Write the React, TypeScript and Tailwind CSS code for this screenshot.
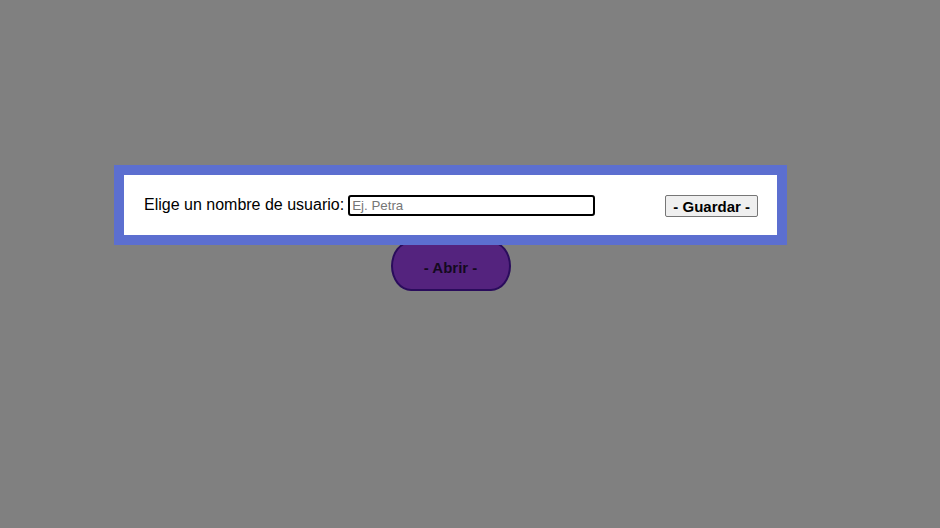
import React from "react";

export default function App() {
  return (
    <div
      className="w-[940px] h-[528px] bg-[#808080] overflow-hidden"
      style={{ fontFamily: '"Liberation Sans", Arial, sans-serif' }}
    >
      <div className="w-[673px] ml-[114px] pt-[165px] flex flex-col items-center">
        <div className="relative z-10 w-full h-[80px] border-[10px] border-[#5c6fd0] bg-white flex items-center pl-[20px] pr-[19px]">
          <label className="text-[16px] text-black leading-none">Elige un nombre de usuario:</label>
          <input
            placeholder="Ej. Petra"
            className="ml-[4px] w-[247px] h-[21px] border-2 border-black rounded-[3px] px-[2px] text-[13.33px] text-black placeholder:text-[#767676] outline-none bg-white"
            style={{ fontFamily: '"Liberation Sans", Arial, sans-serif' }}
          />
          <div className="flex-1" />
          <button className="mt-[2px] h-[22px] px-[7px] bg-[#efefef] border border-[#767676] rounded-[2px] text-[15px] font-bold text-black leading-none">
            - Guardar -
          </button>
        </div>
        <button className="-mt-[4px] w-[120px] h-[50px] bg-[#54237e] border-2 border-[#2a0c5c] rounded-[20px/50%] text-[15px] font-bold text-[#140a1e] leading-none pt-[2px]">
          - Abrir -
        </button>
      </div>
    </div>
  );
}
